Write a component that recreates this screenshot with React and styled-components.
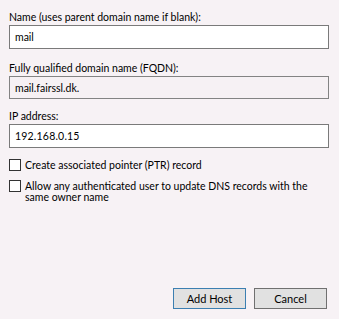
import React from 'react';
import styled, { createGlobalStyle } from 'styled-components';

// --- Global ---
const GlobalStyle = createGlobalStyle`
  html, body {
    margin: 0;
    padding: 0;
    background: #f7f2f5;
  }
  body {
    font-family: Lato, 'Liberation Sans', sans-serif;
    font-size: 10.5px;
    color: #000;
  }
`;

// --- Styled Components ---
const Dialog = styled.div`
  width: 339px;
  height: 319px;
  box-sizing: border-box;
  padding: 11px 10px 10px 9px;
  display: flex;
  flex-direction: column;
`;

const Label = styled.label`
  display: block;
  height: 13px;
  line-height: 13px;
  margin-top: ${props => props.gap || 0}px;
  margin-bottom: 1px;
  white-space: nowrap;
`;

const TextBox = styled.div`
  box-sizing: border-box;
  width: 320px;
  height: ${props => props.h || 24}px;
  border: 1px solid ${props => (props.readOnly ? '#838383' : '#7a7a7a')};
  background: ${props => (props.readOnly ? '#f6f1f4' : '#ffffff')};
  padding: 0 5px;
  display: flex;
  align-items: center;
  letter-spacing: ${props => (props.mono ? '0.2px' : '0')};
`;

const CheckRow = styled.div`
  display: flex;
  align-items: flex-start;
  gap: 4px;
  margin-top: ${props => props.gap || 0}px;
  line-height: 11px;
`;

const Box = styled.span`
  flex: none;
  box-sizing: border-box;
  width: 12px;
  height: 12px;
  border: 1px solid #333333;
  background: #ffffff;
`;

const CheckText = styled.span`
  padding-top: 1px;
  width: 300px;
`;

const Footer = styled.div`
  margin-top: auto;
  display: flex;
  justify-content: flex-end;
  gap: 8px;
  padding-right: 2px;
`;

const Button = styled.button`
  box-sizing: border-box;
  width: 73px;
  height: 21px;
  padding: 0;
  font-family: inherit;
  font-size: 11px;
  color: #000;
  background: #e1e1e1;
  border: 1px solid ${props => (props.primary ? '#3c7fb1' : '#707070')};
  border-radius: 0;
`;

function App() {
  return (
    <>
      <GlobalStyle />
      <Dialog>
        <Label>Name (uses parent domain name if blank):</Label>
        <TextBox>mail</TextBox>

        <Label gap={13}>Fully qualified domain name (FQDN):</Label>
        <TextBox readOnly h={23}>mail.fairssl.dk.</TextBox>

        <Label gap={11}>IP address:</Label>
        <TextBox mono>192.168.0.15</TextBox>

        <CheckRow gap={11}>
          <Box />
          <CheckText>Create associated pointer (PTR) record</CheckText>
        </CheckRow>
        <CheckRow gap={9}>
          <Box />
          <CheckText>Allow any authenticated user to update DNS records with the same owner name</CheckText>
        </CheckRow>

        <Footer>
          <Button primary>Add Host</Button>
          <Button>Cancel</Button>
        </Footer>
      </Dialog>
    </>
  );
}

export default App;
